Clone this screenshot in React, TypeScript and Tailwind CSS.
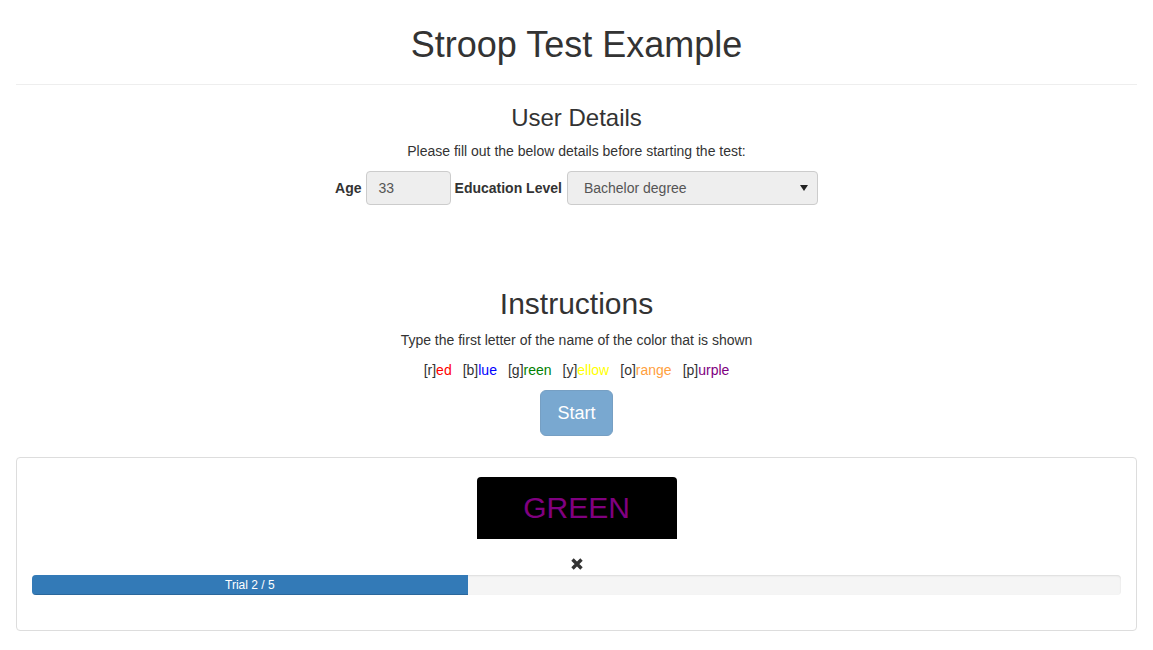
import React from 'react';

const colors: { key: string; rest: string; cls: string }[] = [
  { key: 'r', rest: 'ed', cls: 'text-[#ff0000]' },
  { key: 'b', rest: 'lue', cls: 'text-[#0000ff]' },
  { key: 'g', rest: 'reen', cls: 'text-[#008000]' },
  { key: 'y', rest: 'ellow', cls: 'text-[#ffff00]' },
  { key: 'o', rest: 'range', cls: 'text-[#ffa040]' },
  { key: 'p', rest: 'urple', cls: 'text-[#800080]' },
];

const App: React.FC = () => {
  const progress = 40;

  return (
    <div className="min-h-[650px] bg-white px-4 text-[14px] leading-[20px] text-[#333] [font-family:'Liberation_Sans',Arial,sans-serif]">
      <header className="border-b border-[#eee] pt-[25px] pb-[9px] mb-[20px]">
        <h1 className="text-center text-[36px] leading-[40px] font-normal mb-[10px]">Stroop Test Example</h1>
      </header>

      <section className="text-center">
        <h3 className="text-[24px] leading-[26px] font-normal mb-[10px]">User Details</h3>
        <p className="mb-[10px]">Please fill out the below details before starting the test:</p>
        <div className="flex items-center justify-center">
          <label className="font-bold mr-[4px]">Age</label>
          <div className="w-[85px] h-[34px] px-[12px] py-[6px] border border-[#ccc] rounded-[4px] bg-[#eee] text-[#555] text-left">33</div>
          <label className="font-bold ml-[4px] mr-[5px]">Education Level</label>
          <div className="w-[251px] h-[34px] pl-[16px] pr-[8px] flex items-center justify-between border border-[#ccc] rounded-[4px] bg-[#eee] text-[#555]">
            <span>Bachelor degree</span>
            <svg width="8" height="6" viewBox="0 0 8 6" className="mr-[1px]">
              <path d="M0 0 L8 0 L4 6 Z" fill="#222" />
            </svg>
          </div>
        </div>
      </section>

      <section className="text-center mt-[82px]">
        <h2 className="text-[30px] leading-[33px] font-normal mb-[10px]">Instructions</h2>
        <p className="mb-[10px]">Type the first letter of the name of the color that is shown</p>
        <p className="mb-[10px] flex justify-center gap-[11px]">
          {colors.map((c) => (
            <span key={c.key}>
              [{c.key}]<span className={c.cls}>{c.rest}</span>
            </span>
          ))}
        </p>
        <button
          disabled
          className="h-[46px] px-[16px] text-[18px] leading-[24px] text-white bg-[#337ab7] border border-[#2e6da4] rounded-[6px] opacity-65"
        >
          Start
        </button>
      </section>

      <div className="mt-[21px] border border-[#ddd] rounded-[4px] px-[15px] pt-[19px] pb-[15px]">
        <div className="flex justify-center">
          <div className="w-[200px] h-[62px] bg-black rounded-t-[4px] flex items-center justify-center text-[30px] text-[#800080]">
            GREEN
          </div>
        </div>
        <div className="mt-[15px] h-[20px] flex items-center justify-center">
          <svg width="14" height="14" viewBox="0 0 14 14">
            <path d="M2.5 2.5 L11.5 11.5 M11.5 2.5 L2.5 11.5" stroke="#333" strokeWidth="3.4" strokeLinecap="butt" />
          </svg>
        </div>
        <div className="mt-[1px] mb-[20px] h-[20px] bg-[#f5f5f5] rounded-[4px] overflow-hidden shadow-[inset_0_1px_2px_rgba(0,0,0,0.1)]">
          <div
            className="h-full bg-[#337ab7] text-white text-[12px] leading-[20px] text-center shadow-[inset_0_-1px_0_rgba(0,0,0,0.15)]"
            style={{ width: `${progress}%` }}
          >
            Trial 2 / 5
          </div>
        </div>
      </div>
    </div>
  );
};

export default App;
